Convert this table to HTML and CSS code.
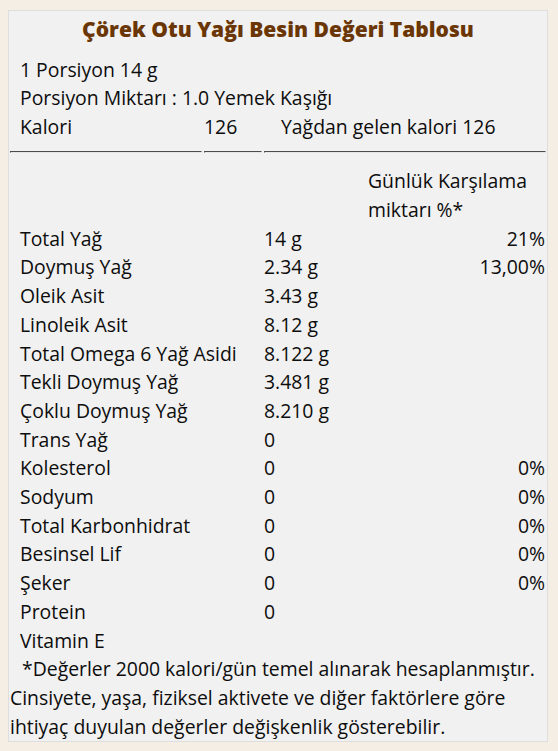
FILE: index.html
```html
<!DOCTYPE html>
<html lang="tr">
<head>
<meta charset="utf-8">
<title>Çörek Otu Yağı Besin Değeri Tablosu</title>
<link rel="stylesheet" href="styles.css">
</head>
<body>
<div class="card">
  <h1 class="title">Çörek Otu Yağı Besin Değeri Tablosu</h1>
  <div class="info">
    <div class="line">1 Porsiyon 14 g</div>
    <div class="line">Porsiyon Miktarı : 1.0 Yemek Kaşığı</div>
  </div>
  <div class="kcal">
    <div class="c1">Kalori</div>
    <div class="c2">126</div>
    <div class="c3">Yağdan gelen kalori 126</div>
    <hr class="sep"><hr class="sep"><hr class="sep">
  </div>
  <div class="nutr">
    <div class="n1"></div><div class="n2"></div><div class="n3 head">Günlük Karşılama miktarı %*</div>
    <div class="n1">Total Yağ</div><div class="n2">14 g</div><div class="n3">21%</div>
    <div class="n1">Doymuş Yağ</div><div class="n2">2.34 g</div><div class="n3">13,00%</div>
    <div class="n1">Oleik Asit</div><div class="n2">3.43 g</div><div class="n3"></div>
    <div class="n1">Linoleik Asit</div><div class="n2">8.12 g</div><div class="n3"></div>
    <div class="n1">Total Omega 6 Yağ Asidi</div><div class="n2">8.122 g</div><div class="n3"></div>
    <div class="n1">Tekli Doymuş Yağ</div><div class="n2">3.481 g</div><div class="n3"></div>
    <div class="n1">Çoklu Doymuş Yağ</div><div class="n2">8.210 g</div><div class="n3"></div>
    <div class="n1">Trans Yağ</div><div class="n2">0</div><div class="n3"></div>
    <div class="n1">Kolesterol</div><div class="n2">0</div><div class="n3">0%</div>
    <div class="n1">Sodyum</div><div class="n2">0</div><div class="n3">0%</div>
    <div class="n1">Total Karbonhidrat</div><div class="n2">0</div><div class="n3">0%</div>
    <div class="n1">Besinsel Lif</div><div class="n2">0</div><div class="n3">0%</div>
    <div class="n1">Şeker</div><div class="n2">0</div><div class="n3">0%</div>
    <div class="n1">Protein</div><div class="n2">0</div><div class="n3"></div>
    <div class="n1">Vitamin E</div><div class="n2"></div><div class="n3"></div>
  </div>
  <p class="note">*Değerler 2000 kalori/gün temel alınarak hesaplanmıştır.<br>Cinsiyete, yaşa, fiziksel aktivete ve diğer faktörlere göre<br>ihtiyaç duyulan değerler değişkenlik gösterebilir.</p>
</div>
</body>
</html>
```

FILE: styles.css
```css
html, body {
  margin: 0;
  padding: 0;
}
body {
  background: #f4eee5;
  font-family: "Open Sans", "Liberation Sans", sans-serif;
  font-size: 19.4px;
  color: #0d0d0d;
  padding: 10px 10px 10px 8px;
}
.card {
  width: 538px;
  background: #f1f1f1;
  border: 1px solid #dedede;
  line-height: 28.7px;
}
.title {
  margin: 0;
  height: 36px;
  line-height: 36px;
  text-align: center;
  font-size: 21px;
  font-weight: 800;
  color: #6b3605;
}
.info {
  margin-top: 8.6px;
  padding-left: 11px;
}
.kcal {
  display: grid;
  grid-template-columns: 192px 58px 282px;
  column-gap: 2px;
  margin-left: 1px;
}
.kcal .c1 { padding-left: 10px; }
.kcal .c3 { padding-left: 17px; }
.sep {
  margin: 9px 0 0;
  height: 0;
  border: 1px inset #eee;
  border-top-color: #a0a0a0;
  border-left-color: #a0a0a0;
  border-bottom-color: #e6e6e6;
  border-right-color: #e6e6e6;
}
.nutr {
  display: grid;
  grid-template-columns: 252px 102px 178px;
  column-gap: 2px;
  margin-left: 1px;
  margin-top: 14.6px;
}
.n1 { padding-left: 10px; white-space: nowrap; }
.n3 { text-align: right; padding-right: 1px; }
.n3.head { text-align: left; }
.note {
  margin: 0;
  padding-left: 1px;
  text-indent: 12px;
  white-space: nowrap;
}
```
